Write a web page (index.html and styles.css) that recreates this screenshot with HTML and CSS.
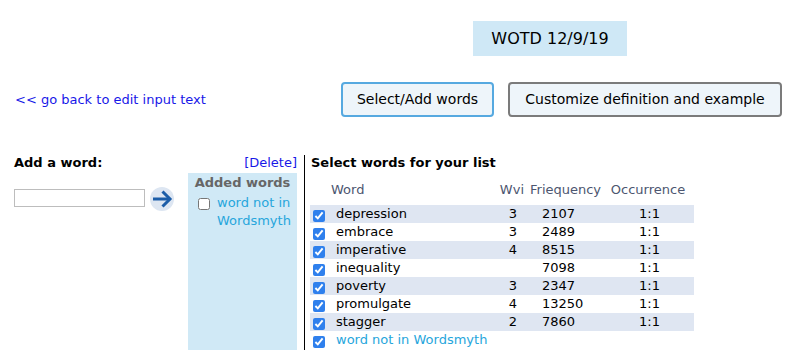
FILE: index.html
```html
<!DOCTYPE html>
<html>
<head>
<meta charset="utf-8">
<link rel="stylesheet" href="styles.css">
</head>
<body>
<div class="page">
  <div class="title-row">
    <div class="wotd">WOTD 12/9/19</div>
  </div>
  <div class="nav-row">
    <a class="back" href="#">&lt;&lt; go back to edit input text</a>
    <div class="tabs">
      <button class="tab active">Select/Add words</button>
      <button class="tab wide">Customize definition and example</button>
    </div>
  </div>
  <div class="main">
    <div class="add-col">
      <div class="heading">Add a word:</div>
      <div class="add-row">
        <input class="word-input" type="text">
        <svg class="go" width="24" height="24" viewBox="0 0 24 24">
          <circle cx="12" cy="12" r="12" fill="#dde6f2"/>
          <path d="M3 12 H20" stroke="#1c5da8" stroke-width="3" fill="none"/>
          <path d="M12.5 4.5 L20 12 L12.5 19.5" stroke="#1c5da8" stroke-width="3" fill="none"/>
        </svg>
      </div>
    </div>
    <div class="added-col">
      <a class="delete" href="#">[Delete]</a>
      <div class="added-panel">
        <div class="added-title">Added words</div>
        <label class="added-item">
          <input type="checkbox" class="cb-plain">
          <span class="new-word">word not in Wordsmyth</span>
        </label>
      </div>
    </div>
    <div class="select-col">
      <div class="heading">Select words for your list</div>
      <table class="words">
        <colgroup>
          <col class="c-cb"><col class="c-word"><col class="c-wvi"><col class="c-freq"><col class="c-occ">
        </colgroup>
        <thead>
          <tr><th></th><th class="h-word">Word</th><th class="h-wvi">Wvi</th><th class="h-freq">Friequency</th><th class="h-occ">Occurrence</th></tr>
        </thead>
        <tbody>
          <tr class="odd"><td><input type="checkbox" checked></td><td class="w">depression</td><td class="n">3</td><td class="f">2107</td><td class="o">1:1</td></tr>
          <tr><td><input type="checkbox" checked></td><td class="w">embrace</td><td class="n">3</td><td class="f">2489</td><td class="o">1:1</td></tr>
          <tr class="odd"><td><input type="checkbox" checked></td><td class="w">imperative</td><td class="n">4</td><td class="f">8515</td><td class="o">1:1</td></tr>
          <tr><td><input type="checkbox" checked></td><td class="w">inequality</td><td class="n"></td><td class="f">7098</td><td class="o">1:1</td></tr>
          <tr class="odd"><td><input type="checkbox" checked></td><td class="w">poverty</td><td class="n">3</td><td class="f">2347</td><td class="o">1:1</td></tr>
          <tr><td><input type="checkbox" checked></td><td class="w">promulgate</td><td class="n">4</td><td class="f">13250</td><td class="o">1:1</td></tr>
          <tr class="odd"><td><input type="checkbox" checked></td><td class="w">stagger</td><td class="n">2</td><td class="f">7860</td><td class="o">1:1</td></tr>
          <tr><td><input type="checkbox" checked></td><td class="w new-word" colspan="4">word not in Wordsmyth</td></tr>
        </tbody>
      </table>
    </div>
  </div>
</div>
</body>
</html>
```

FILE: styles.css
```css
html, body {
  margin: 0;
  padding: 0;
  background: #ffffff;
}
body {
  font-family: "DejaVu Sans", Verdana, sans-serif;
  font-size: 13px;
  color: #000;
}
.page {
  width: 800px;
  height: 357px;
  overflow: hidden;
  padding: 21px 0 0 14px;
  box-sizing: border-box;
}
.title-row {
  display: flex;
  padding-left: 459px;
}
.wotd {
  width: 154px;
  height: 35px;
  background: #cfe8f6;
  font-size: 16px;
  display: flex;
  align-items: center;
  justify-content: center;
}
.nav-row {
  display: flex;
  align-items: center;
  justify-content: space-between;
  margin-top: 25px;
  padding-right: 18px;
  height: 36px;
}
.back {
  color: #1818e8;
  text-decoration: none;
  margin-left: 1px;
  font-size: 13px;
}
.tabs {
  display: flex;
  gap: 14px;
}
.tab {
  font-family: "DejaVu Sans", Verdana, sans-serif;
  font-size: 14px;
  color: #000;
  width: 153px;
  height: 35px;
  padding: 0;
  text-align: center;
  background: #eef5fa;
  border: 2px solid #7b7b7b;
  border-radius: 4px;
}
.tab.wide {
  width: 274px;
}
.tab.active {
  border-color: #56a9e0;
}
.main {
  display: flex;
  margin-top: 38px;
  height: 195px;
}
.heading {
  font-weight: bold;
  line-height: 16px;
  height: 16px;
}
.add-col {
  width: 174px;
}
.add-row {
  display: flex;
  align-items: center;
  gap: 5px;
  margin-top: 14px;
}
.word-input {
  width: 131px;
  height: 18px;
  box-sizing: border-box;
  border: 1px solid #bdbdbd;
  margin: 0;
  padding: 0 2px;
}
.go {
  margin-top: 2px;
}
.added-col {
  width: 109px;
  display: flex;
  flex-direction: column;
}
.delete {
  align-self: flex-end;
  color: #1818e8;
  text-decoration: none;
  line-height: 16px;
  height: 18px;
}
.added-panel {
  flex: 1;
  background: #d0e9f6;
  padding-top: 2px;
}
.added-title {
  font-weight: bold;
  color: #666;
  text-align: center;
  line-height: 16px;
}
.added-item {
  display: flex;
  align-items: flex-start;
  margin-top: 3px;
  line-height: 18px;
}
.cb-plain {
  width: 12px;
  height: 12px;
  margin: 4px 7px 0 10px;
  flex: none;
}
.new-word {
  color: #27a6dc;
}
.select-col {
  margin-left: 7px;
  border-left: 1px solid #000;
  padding-left: 6px;
}
.words {
  margin-top: 10px;
  margin-left: -1px;
  width: 384px;
  table-layout: fixed;
  border-collapse: collapse;
}
.c-cb { width: 20px; }
.c-word { width: 164px; }
.c-wvi { width: 30px; }
.c-freq { width: 81px; }
.c-occ { width: 89px; }
.words th {
  font-weight: normal;
  color: #4c5670;
  text-align: left;
  height: 18px;
  line-height: 18px;
  padding: 0 0 6px 0;
  white-space: nowrap;
}
.words th.h-word { padding-left: 1px; }
.words th.h-wvi { text-align: right; padding-right: 0; }
.words th.h-freq { padding-left: 6px; }
.words th.h-occ { text-align: center; padding-right: 3px; }
.words td {
  height: 18px;
  line-height: 18px;
  padding: 0;
  white-space: nowrap;
}
.words tr.odd td { background: #dfe6f2; }
.words td input {
  width: 12px;
  height: 12px;
  margin: 3px 0 0 3px;
  display: block;
  accent-color: #2f80ed;
}
.words td.w { padding-left: 6px; }
.words td.n { text-align: right; padding-right: 7px; }
.words td.f { padding-left: 18px; }
.words td.o { text-align: center; }
```
